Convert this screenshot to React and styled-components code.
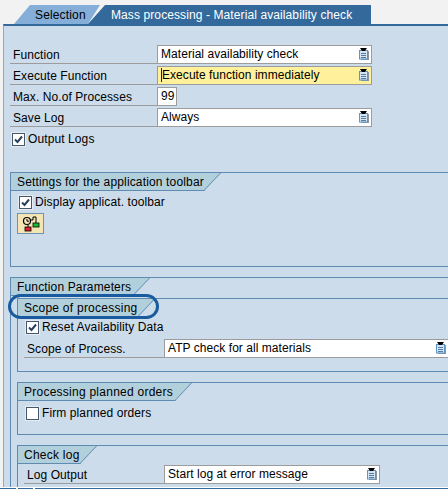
import React from "react";
import styled, { createGlobalStyle } from "styled-components";

const GlobalStyle = createGlobalStyle`
  html, body {
    margin: 0;
    padding: 0;
    background: #f2f2f2;
    overflow: hidden;
  }
  body {
    font-family: "Liberation Sans", Arial, sans-serif;
    font-size: 12px;
    color: #000;
  }
`;

const Shell = styled.div`
  position: relative;
`;

const Page = styled.div`
  width: 448px;
  height: 489px;
  overflow: hidden;
  padding-top: 5px;
  box-sizing: border-box;
`;

const TabStrip = styled.div`
  display: flex;
  height: 19px;
  padding-left: 14px;
`;

const Tab = styled.div`
  height: 19px;
  line-height: 20px;
  box-sizing: border-box;
  flex: none;
  white-space: nowrap;
  width: ${(p) => p.$width}px;
  margin-left: ${(p) => p.$overlap || 0}px;
  padding-left: ${(p) => p.$pad}px;
  background: ${(p) => (p.$active ? "#85aed8" : "#336a9b")};
  color: ${(p) => (p.$active ? "#000" : "#fff")};
  letter-spacing: ${(p) => (p.$active ? "0.15px" : "0.1px")};
  clip-path: ${(p) => p.$clip};
`;

const Panel = styled.div`
  margin-left: 3px;
  width: 500px;
  height: 470px;
  box-sizing: border-box;
  background: #ccdcea;
  border-top: 2px solid #336a9b;
  border-left: 1px solid #8fa9c4;
  padding: 19px 0 0 6px;
`;

const Form = styled.div`
  display: flex;
  flex-direction: column;
  gap: 2px;
  width: 363px;
`;

const Row = styled.div`
  display: flex;
  height: 19px;
  margin: ${(p) => p.$margin || "0"};
`;

const Label = styled.div`
  flex: none;
  width: ${(p) => p.$width || 147}px;
  height: 19px;
  line-height: 20px;
  box-sizing: border-box;
  padding-left: 3px;
  border-bottom: 1px solid #9c9c9c;
  letter-spacing: 0.08px;
  white-space: nowrap;
`;

const Field = styled.div`
  flex: none;
  display: flex;
  align-items: center;
  justify-content: space-between;
  width: ${(p) => p.$width}px;
  height: 19px;
  box-sizing: border-box;
  padding: 0 2px 1px 3px;
  background: ${(p) => (p.$focused ? "#fff09b" : "#fff")};
  border: 1px solid #9c9c9c;
  letter-spacing: 0.05px;
  white-space: nowrap;
`;

const Value = styled.span`
  ${(p) => p.$caret && "border-left: 1px solid #1a1a6e;"}
`;

const CheckRow = styled.div`
  display: flex;
  align-items: center;
  gap: 3px;
  height: 14px;
  margin: ${(p) => p.$margin || "0 0 0 2px"};
  letter-spacing: 0.1px;
  white-space: nowrap;
`;

const Box = styled.span`
  flex: none;
  display: flex;
  align-items: center;
  justify-content: center;
  width: 13px;
  height: 13px;
  box-sizing: border-box;
  background: #fff;
  border: 1px solid #46566b;
  box-shadow: 0 0 0 1px #e4ecf4;
`;

const Group = styled.section`
  box-sizing: border-box;
  height: ${(p) => p.$height}px;
  margin: ${(p) => p.$margin || "0"};
  border: 1px solid #5f8bb2;
  border-right: none;
  ${(p) => p.$open && "border-bottom: none;"}
`;

const GroupHeader = styled.div`
  position: relative;
  height: 18px;
  line-height: 18px;
  box-sizing: border-box;
  width: ${(p) => p.$width}px;
  padding-left: 6px;
  letter-spacing: ${(p) => (p.$inner ? "0.25px" : "0.15px")};
  white-space: nowrap;
  background: #b2cfdc;
  clip-path: polygon(0 0, 100% 0, calc(100% - 17px) 100%, 0 100%);
`;

const HeaderLine = styled.svg`
  display: block;
  position: absolute;
  left: 0;
  top: 0;
  width: 100%;
  height: 100%;
`;

const GroupBody = styled.div`
  padding: ${(p) => p.$pad};
`;

const ToolButton = styled.button`
  display: flex;
  align-items: center;
  justify-content: center;
  width: 27px;
  height: 21px;
  padding: 0;
  margin-top: 4px;
  background: #f5e4b4;
  border: 1px solid #6d93b5;
`;

const Marker = styled.div`
  position: absolute;
  left: 8px;
  top: 294px;
  width: 151px;
  height: 25px;
  box-sizing: border-box;
  border: 3px solid #1a5a9e;
  border-radius: 13px;
`;

const BottomBar = styled.div`
  position: absolute;
  left: 0;
  top: 487px;
  width: 448px;
  height: 2px;
  display: flex;
  gap: 2px;
  box-sizing: border-box;
  background: #fff;
  padding-top: 1px;
`;

const BarPiece = styled.div`
  height: 1px;
  background: #336a9b;
  flex: ${(p) => (p.$width ? `0 0 ${p.$width}px` : "1")};
`;

const DropIcon = styled.svg`
  flex: none;
`;

const Check = () => (
  <svg width="11" height="11" viewBox="0 0 11 11">
    <path d="M2 5.5 L4.5 8 L9 2.5" fill="none" stroke="#2a3f5c" strokeWidth="2" />
  </svg>
);

const Dropdown = () => (
  <DropIcon width="10" height="12" viewBox="0 0 10 12">
    <rect x="2" y="3" width="8" height="9" fill="#8a97a3" />
    <rect x="0.5" y="2.5" width="8" height="8.5" fill="#d6e4f0" stroke="#5f95c4" />
    <path d="M2 5.5h5M2 7.5h5M2 9.5h5" stroke="#4f7ea8" strokeWidth="1" />
    <path d="M1 0h7L6 3H3z" fill="#000" />
  </DropIcon>
);

const StatusIcon = () => (
  <svg width="20" height="17" viewBox="0 0 20 17">
    <circle cx="6" cy="6" r="3.5" fill="#f5e4b4" stroke="#000" strokeWidth="1.2" />
    <path d="M6 4v2.2h2M9 5h3V2h3v4" fill="none" stroke="#000" strokeWidth="1" />
    <rect x="4" y="12" width="6" height="4" fill="#e0202a" stroke="#000" strokeWidth="0.8" />
    <rect x="12" y="8" width="6" height="4" fill="#12c030" stroke="#000" strokeWidth="0.8" />
    <path d="M7 10v2M15 6v2" stroke="#000" strokeWidth="1" />
  </svg>
);

const Header = ({ width, inner, children }) => (
  <GroupHeader $width={width} $inner={inner}>
    {children}
    <HeaderLine viewBox={`0 0 ${width} 18`}>
      <path d={`M${width} 0 L${width - 17} 18`} stroke="#5f8bb2" strokeWidth="1.4" fill="none" />
      <path d={`M0 17.5 H${width - 16}`} stroke="#5f8bb2" fill="none" />
    </HeaderLine>
  </GroupHeader>
);

const App = () => (
  <>
    <GlobalStyle />
    <Shell>
      <Page>
        <TabStrip>
          <Tab
            $active
            $width={86}
            $pad={21}
            $clip="polygon(16px 0, 100% 0, 74px 100%, 0 100%)"
          >
            Selection
          </Tab>
          <Tab
            $width={283}
            $overlap={-12}
            $pad={23}
            $clip="polygon(17px 0, 100% 0, 100% 100%, 0 100%)"
          >
            Mass processing - Material availability check
          </Tab>
        </TabStrip>
        <Panel>
          <Form>
            <Row>
              <Label>Function</Label>
              <Field $width={215}>
                <Value>Material availability check</Value>
                <Dropdown />
              </Field>
            </Row>
            <Row>
              <Label>Execute Function</Label>
              <Field $width={215} $focused>
                <Value $caret>Execute function immediately</Value>
                <Dropdown />
              </Field>
            </Row>
            <Row>
              <Label>Max. No.of Processes</Label>
              <Field $width={20}>
                <Value>99</Value>
              </Field>
            </Row>
            <Row>
              <Label>Save Log</Label>
              <Field $width={215}>
                <Value>Always</Value>
                <Dropdown />
              </Field>
            </Row>
          </Form>
          <CheckRow $margin="5px 0 0 2px">
            <Box>
              <Check />
            </Box>
            Output Logs
          </CheckRow>

          <Group $height={95} $margin="26px 0 0 0">
            <Header width={210}>Settings for the application toolbar</Header>
            <GroupBody $pad="4px 0 0 6px">
              <CheckRow>
                <Box>
                  <Check />
                </Box>
                Display applicat. toolbar
              </CheckRow>
              <ToolButton>
                <StatusIcon />
              </ToolButton>
            </GroupBody>
          </Group>

          <Group $height={230} $margin="10px 0 0 0" $open>
            <Header width={139}>Function Parameters</Header>
            <GroupBody $pad="2px 0 0 6px">
              <Group $height={74}>
                <Header width={137} inner>
                  Scope of processing
                </Header>
                <GroupBody $pad="3px 0 0 6px">
                  <CheckRow>
                    <Box>
                      <Check />
                    </Box>
                    Reset Availability Data
                  </CheckRow>
                  <Row $margin="5px 0 0 0">
                    <Label $width={140}>Scope of Process.</Label>
                    <Field $width={285}>
                      <Value>ATP check for all materials</Value>
                      <Dropdown />
                    </Field>
                  </Row>
                </GroupBody>
              </Group>

              <Group $height={53} $margin="10px 0 0 0">
                <Header width={174} inner>
                  Processing planned orders
                </Header>
                <GroupBody $pad="5px 0 0 6px">
                  <CheckRow>
                    <Box />
                    Firm planned orders
                  </CheckRow>
                </GroupBody>
              </Group>

              <Group $height={60} $margin="10px 0 0 0" $open>
                <Header width={79} inner>
                  Check log
                </Header>
                <GroupBody $pad="1px 0 0 6px">
                  <Row>
                    <Label $width={140}>Log Output</Label>
                    <Field $width={216}>
                      <Value>Start log at error message</Value>
                      <Dropdown />
                    </Field>
                  </Row>
                </GroupBody>
              </Group>
            </GroupBody>
          </Group>
        </Panel>
      </Page>
      <Marker />
      <BottomBar>
        <BarPiece $width={16} />
        <BarPiece $width={15} />
        <BarPiece />
      </BottomBar>
    </Shell>
  </>
);

export default App;
